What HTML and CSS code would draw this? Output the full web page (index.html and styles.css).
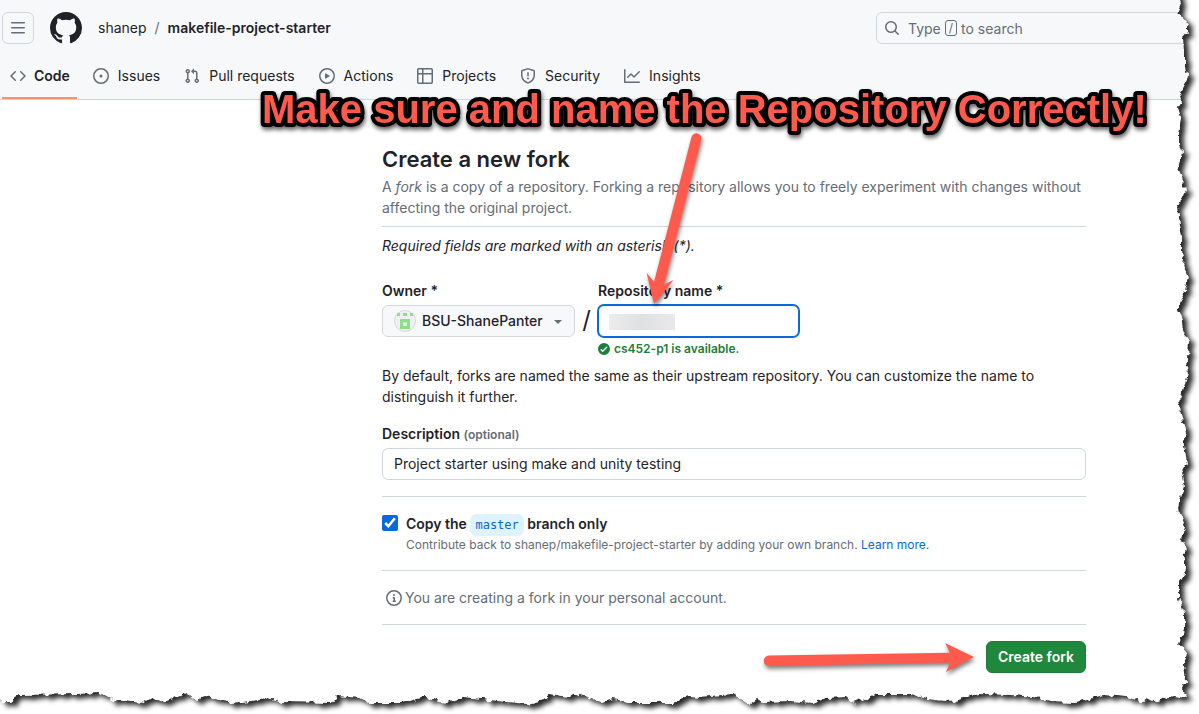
FILE: index.html
```html
<!DOCTYPE html>
<html lang="en">
<head>
<meta charset="utf-8">
<title>Fork shanep/makefile-project-starter</title>
<link rel="stylesheet" href="styles.css">
</head>
<body>
<div class="page">
  <header class="header">
    <div class="topbar">
      <button class="menu-button" type="button" aria-label="Open menu">
        <svg class="icon" viewBox="0 0 16 16"><path d="M1 2.75A.75.75 0 0 1 1.75 2h12.5a.75.75 0 0 1 0 1.5H1.75A.75.75 0 0 1 1 2.75Zm0 5A.75.75 0 0 1 1.75 7h12.5a.75.75 0 0 1 0 1.5H1.75A.75.75 0 0 1 1 7.75ZM1.75 12h12.5a.75.75 0 0 1 0 1.5H1.75a.75.75 0 0 1 0-1.5Z"/></svg>
      </button>
      <a class="logo" href="#" aria-label="Homepage">
        <svg viewBox="0 0 16 16"><path d="M8 0c4.42 0 8 3.58 8 8a8.013 8.013 0 0 1-5.45 7.59c-.4.08-.55-.17-.55-.38 0-.27.01-1.13.01-2.2 0-.75-.25-1.23-.54-1.48 1.78-.2 3.65-.88 3.65-3.95 0-.88-.31-1.59-.82-2.15.08-.2.36-1.02-.08-2.12 0 0-.67-.22-2.2.82-.64-.18-1.32-.27-2-.27-.68 0-1.36.09-2 .27-1.53-1.03-2.2-.82-2.2-.82-.44 1.1-.16 1.92-.08 2.12-.51.56-.82 1.28-.82 2.15 0 3.06 1.86 3.75 3.64 3.95-.23.2-.44.55-.51 1.07-.46.21-1.61.55-2.33-.66-.15-.24-.6-.83-1.23-.82-.67.01-.27.38.01.53.34.19.73.9.82 1.13.16.45.68 1.31 2.69.94 0 .67.01 1.3.01 1.49 0 .21-.15.45-.55.38A7.995 7.995 0 0 1 0 8c0-4.42 3.58-8 8-8Z"/></svg>
      </a>
      <nav class="crumbs" aria-label="Breadcrumb">
        <a href="#">shanep</a><span class="crumb-sep">/</span><a class="strong" href="#">makefile-project-starter</a>
      </nav>
      <button class="search" type="button">
        <svg class="icon" viewBox="0 0 16 16"><path d="M10.68 11.74a6 6 0 0 1-7.922-8.982 6 6 0 0 1 8.982 7.922l3.04 3.04a.749.749 0 0 1-.326 1.275.749.749 0 0 1-.734-.215ZM11.5 7a4.499 4.499 0 1 0-8.997 0A4.499 4.499 0 0 0 11.5 7Z"/></svg>
        <span class="search-text">Type <kbd>/</kbd> to search</span>
      </button>
    </div>
    <nav class="tabs" aria-label="Repository">
      <a class="tab current" href="#"><svg class="icon" viewBox="0 0 16 16"><path d="m11.28 3.22 4.25 4.25a.75.75 0 0 1 0 1.06l-4.25 4.25a.749.749 0 0 1-1.275-.326.749.749 0 0 1 .215-.734L13.94 8l-3.72-3.72a.749.749 0 0 1 .326-1.275.749.749 0 0 1 .734.215Zm-6.56 0a.751.751 0 0 1 1.042.018.751.751 0 0 1 .018 1.042L2.06 8l3.72 3.72a.749.749 0 0 1-.326 1.275.749.749 0 0 1-.734-.215L.47 8.53a.75.75 0 0 1 0-1.06Z"/></svg>Code</a>
      <a class="tab" href="#"><svg class="icon" viewBox="0 0 16 16"><path d="M8 9.5a1.5 1.5 0 1 0 0-3 1.5 1.5 0 0 0 0 3Z"/><path d="M8 0a8 8 0 1 1 0 16A8 8 0 0 1 8 0ZM1.5 8a6.5 6.5 0 1 0 13 0 6.5 6.5 0 0 0-13 0Z"/></svg>Issues</a>
      <a class="tab" href="#"><svg class="icon" viewBox="0 0 16 16"><path d="M1.5 3.25a2.25 2.25 0 1 1 3 2.122v5.256a2.251 2.251 0 1 1-1.5 0V5.372A2.25 2.25 0 0 1 1.5 3.25Zm5.677-.177L9.573.677A.25.25 0 0 1 10 .854V2.5h1A2.5 2.5 0 0 1 13.5 5v5.628a2.251 2.251 0 1 1-1.5 0V5a1 1 0 0 0-1-1h-1v1.646a.25.25 0 0 1-.427.177L7.177 3.427a.25.25 0 0 1 0-.354ZM3.75 2.5a.75.75 0 1 0 0 1.5.75.75 0 0 0 0-1.5Zm0 9.5a.75.75 0 1 0 0 1.5.75.75 0 0 0 0-1.5Zm8.25.75a.75.75 0 1 0 1.5 0 .75.75 0 0 0-1.5 0Z"/></svg>Pull requests</a>
      <a class="tab" href="#"><svg class="icon" viewBox="0 0 16 16"><path d="M8 0a8 8 0 1 1 0 16A8 8 0 0 1 8 0ZM1.5 8a6.5 6.5 0 1 0 13 0 6.5 6.5 0 0 0-13 0Zm4.879-2.773 4.264 2.559a.25.25 0 0 1 0 .428l-4.264 2.559A.25.25 0 0 1 6 10.559V5.442a.25.25 0 0 1 .379-.215Z"/></svg>Actions</a>
      <a class="tab" href="#"><svg class="icon" viewBox="0 0 16 16"><path d="M0 1.75C0 .784.784 0 1.75 0h12.5C15.216 0 16 .784 16 1.75v12.5A1.75 1.75 0 0 1 14.25 16H1.75A1.75 1.75 0 0 1 0 14.25ZM6.5 6.5v8h7.75a.25.25 0 0 0 .25-.25V6.5Zm8-1.5V1.75a.25.25 0 0 0-.25-.25H6.5V5Zm-13 1.5v7.75c0 .138.112.25.25.25H5v-8ZM5 5V1.5H1.75a.25.25 0 0 0-.25.25V5Z"/></svg>Projects</a>
      <a class="tab" href="#"><svg class="icon" viewBox="0 0 16 16"><path d="M7.467.133a1.748 1.748 0 0 1 1.066 0l5.25 1.68A1.75 1.75 0 0 1 15 3.48V7c0 1.566-.32 3.182-1.303 4.682-.983 1.498-2.585 2.813-5.032 3.855a1.697 1.697 0 0 1-1.33 0c-2.447-1.042-4.049-2.357-5.032-3.855C1.32 10.182 1 8.566 1 7V3.48a1.755 1.755 0 0 1 1.217-1.667Zm.61 1.429a.25.25 0 0 0-.153 0l-5.25 1.68a.25.25 0 0 0-.174.238V7c0 1.358.275 2.666 1.057 3.86.784 1.194 2.121 2.34 4.366 3.297a.196.196 0 0 0 .154 0c2.245-.956 3.582-2.104 4.366-3.298C13.225 9.666 13.5 8.36 13.5 7V3.48a.251.251 0 0 0-.174-.237l-5.25-1.68ZM8.75 4.75v3a.75.75 0 0 1-1.5 0v-3a.75.75 0 0 1 1.5 0ZM9 10.5a1 1 0 1 1-2 0 1 1 0 0 1 2 0Z"/></svg>Security</a>
      <a class="tab" href="#"><svg class="icon" viewBox="0 0 16 16"><path d="M1.5 1.75V13.5h13.75a.75.75 0 0 1 0 1.5H.75a.75.75 0 0 1-.75-.75V1.75a.75.75 0 0 1 1.5 0Zm14.28 2.53-5.25 5.25a.75.75 0 0 1-1.06 0L7 7.06 4.28 9.78a.751.751 0 0 1-1.042-.018.751.751 0 0 1-.018-1.042l3.25-3.25a.75.75 0 0 1 1.06 0L10 7.94l4.72-4.72a.751.751 0 0 1 1.042.018.751.751 0 0 1 .018 1.042Z"/></svg>Insights</a>
    </nav>
  </header>

  <main class="main">
    <h1>Create a new fork</h1>
    <p class="lead">A <em>fork</em> is a copy of a repository. Forking a repository allows you to freely experiment with changes without affecting the original project.</p>
    <form>
      <p class="required">Required fields are marked with an asterisk (*).</p>
      <div class="name-row">
        <div class="field">
          <label for="owner">Owner *</label>
          <div class="owner">
            <select id="owner"><option>BSU-ShanePanter</option></select>
            <svg class="avatar" viewBox="0 0 22 22"><circle cx="11" cy="11" r="10.5" fill="#f0f0f0" stroke="#d5d9dd"/><g fill="#8ae287"><path d="M3 3h3v3H3zM9 3h4v3H9zM16 3h3v3h-3z"/><path fill-rule="evenodd" d="M6 9h10v10H6zM9 12.500v3.500h4v-3.500z"/></g></svg>
            <svg class="caret" viewBox="0 0 8 4"><path d="M0 0h8L4 4z"/></svg>
          </div>
        </div>
        <span class="slash">/</span>
        <div class="field">
          <label for="repo">Repository name *</label>
          <div class="repo">
            <input id="repo" type="text" autocomplete="off">
            <span class="smudge"></span>
          </div>
          <p class="available"><svg viewBox="0 0 12 12"><path fill-rule="evenodd" d="M6 0a6 6 0 1 1 0 12A6 6 0 0 1 6 0Zm-.8 8.800 4-4a.7.7 0 0 0-1-1L4.700 7.300 3.700 6.300a.7.7 0 0 0-1 1l1.500 1.500a.7.7 0 0 0 1 0Z"/></svg>cs452-p1 is available.</p>
        </div>
      </div>
      <p class="hint">By default, forks are named the same as their upstream repository. You can customize the name to distinguish it further.</p>
      <div class="field description">
        <label for="desc">Description <small>(optional)</small></label>
        <input id="desc" type="text" value="Project starter using make and unity testing">
      </div>
      <div class="branch">
        <input id="only" type="checkbox" checked>
        <div>
          <label for="only">Copy the <code>master</code> branch only</label>
          <p>Contribute back to shanep/makefile-project-starter by adding your own branch. <a href="#">Learn more.</a></p>
        </div>
      </div>
      <p class="notice"><svg class="icon" viewBox="0 0 16 16"><path d="M0 8a8 8 0 1 1 16 0A8 8 0 0 1 0 8Zm8-6.500a6.500 6.500 0 1 0 0 13 6.500 6.500 0 0 0 0-13ZM6.500 7.750A.75.75 0 0 1 7.250 7h1a.75.75 0 0 1 .75.75v2.750h.25a.75.75 0 0 1 0 1.500h-2a.75.75 0 0 1 0-1.500h.25v-2h-.25a.75.75 0 0 1-.75-.75ZM8 6a1 1 0 1 1 0-2 1 1 0 0 1 0 2Z"/></svg>You are creating a fork in your personal account.</p>
      <div class="actions"><button class="primary" type="submit">Create fork</button></div>
    </form>
  </main>

  <svg class="arrow arrow-down" viewBox="0 0 70 190"><path d="M51.500 17a5 5 0 0 1 9.700 2.500L24 164.500 33.500 160 14 184 6.500 152.500 14 162Z"/></svg>
  <svg class="arrow arrow-right" viewBox="0 0 220 40"><path d="M9 15.500 190 12.700 185 3 214 17 186 32 190 22.500 9 26a5 5 0 0 1 0-10.500Z"/></svg>
  <svg class="banner" viewBox="0 0 900 60"><text x="8" y="42">Make sure and name the Repository Correctly!</text></svg>

  <svg class="torn-edge" viewBox="0 0 1199 714" preserveAspectRatio="none" aria-hidden="true">
    <filter id="torn" filterUnits="userSpaceOnUse" x="-20" y="-20" width="1239" height="754" color-interpolation-filters="sRGB">
      <feTurbulence type="fractalNoise" baseFrequency="0.15" numOctaves="2" seed="4" result="noise"/>
      <feDisplacementMap in="SourceAlpha" in2="noise" scale="7" xChannelSelector="R" yChannelSelector="G" result="paper"/>
      <feOffset in="paper" dx="5" dy="4"/>
      <feGaussianBlur stdDeviation="2.500" result="soft"/>
      <feFlood flood-color="#2a2a2a"/>
      <feComposite in2="soft" operator="in" result="shadow"/>
      <feFlood flood-color="#fff" result="back"/>
      <feMerge result="under"><feMergeNode in="back"/><feMergeNode in="shadow"/></feMerge>
      <feComposite in="under" in2="paper" operator="out"/>
    </filter>
    <path filter="url(#torn)" d="M-15 -15H1176L1181 3L1177 13L1183 18L1188 25L1188 32L1184 37L1185 50L1185 67L1188 78L1180 93L1182 100L1178 108L1182 120L1179 133L1179 145L1183 153L1178 168L1182 177L1183 185L1187 189L1183 198L1178 207L1180 225L1182 237L1182 250L1184 255L1182 262L1188 278L1186 287L1185 293L1179 303L1179 310L1183 320L1181 324L1184 333L1189 340L1188 360L1186 370L1188 374L1184 387L1179 405L1182 417L1186 433L1183 440L1187 463L1181 473L1184 487L1178 507L1181 517L1185 527L1181 540L1187 549L1183 555L1186 570L1179 581L1179 598L1184 613L1184 630L1179 643L1187 653L1184 665L1186 680L1183 688L1187 698L1173 696L1155 702L1147 698L1142 702L1127 697L1103 695L1087 700L1075 703L1050 702L1033 697L1013 695L980 694L967 697L953 702L927 699L910 694L877 694L863 702L858 697L854 703L847 697L825 698L813 703L790 701L763 702L757 699L750 704L733 694L700 697L690 696L673 703L633 703L613 699L602 703L590 698L575 693L568 697L550 694L545 700L527 704L497 701L465 697L447 703L426 697L400 703L370 703L360 698L337 696L332 703L283 702L265 697L260 700L233 703L205 697L197 700L187 693L173 699L163 703L152 697L143 703L113 700L100 693L77 694L20 695L10 702L3 702L-1 695L-15 695Z"/>
  </svg>
</div>
</body>
</html>
```
FILE: styles.css
```css
* { box-sizing: border-box; }

body {
  margin: 0;
  background: #fff;
  color: #1f2328;
  font: 14px/21px Inter, "Liberation Sans", sans-serif;
}

h1, p { margin: 0; }
a { color: inherit; text-decoration: none; }
button, input, select { font: inherit; color: inherit; }

.page {
  position: relative;
  min-height: 100vh;
  overflow: hidden;
}

.icon {
  width: 16px;
  height: 16px;
  flex: none;
  fill: #656d76;
}

/* Header */
.header {
  background: #f6f8fa;
  border-bottom: 1px solid #d0d7de;
}

.topbar {
  display: flex;
  align-items: center;
  padding: 12px 0 0 2px;
}

.menu-button {
  display: flex;
  align-items: center;
  justify-content: center;
  width: 32px;
  height: 32px;
  padding: 0;
  background: transparent;
  border: 1px solid #d0d7de;
  border-radius: 6px;
}

.logo {
  width: 32px;
  height: 32px;
  margin: 0 16px;
}

.logo svg { display: block; fill: #1f2328; }
.crumbs { padding-bottom: 2px; }
.crumb-sep { margin: 0 8px; color: #656d76; }
.strong { font-weight: 600; }

.search {
  display: flex;
  align-items: center;
  gap: 8px;
  width: 323px;
  height: 32px;
  margin-left: auto;
  padding: 0 7px;
  background: transparent;
  border: 1px solid #d0d7de;
  border-radius: 6px;
  color: #656d76;
}

.search-text {
  display: flex;
  align-items: center;
  gap: 4px;
}

kbd {
  padding: 0 3px;
  border: 1px solid #656d76;
  border-radius: 3px;
  font: 12px/14px Inter, sans-serif;
}

.tabs {
  display: flex;
  gap: 8px;
  padding-left: 2px;
}

.tab {
  display: flex;
  align-items: center;
  gap: 9px;
  height: 55px;
  padding: 10px 8px 0;
  border-bottom: 2px solid transparent;
}

.current {
  gap: 8px;
  padding-right: 7px;
  border-color: #fd8c73;
  font-weight: 600;
}

/* Form */
.main { padding: 43px 113px 41px 382px; }

h1 {
  font-size: 22px;
  line-height: 32px;
  font-weight: 600;
}

.lead {
  padding: 1px 0 8px;
  border-bottom: 1px solid #d0d7de;
  color: #656d76;
}

.required {
  margin: 8px 0 24px;
  font-style: italic;
}

.name-row { display: flex; }

label {
  display: block;
  font-weight: 600;
}

.field label { margin-bottom: 4px; }
.owner, .repo { position: relative; }

.owner select {
  display: block;
  width: 193px;
  height: 32px;
  padding: 0 30px 1px 39px;
  appearance: none;
  background: #f6f8fa;
  border: 1px solid #d5d9dd;
  border-radius: 6px;
  font-weight: 500;
}

.avatar {
  position: absolute;
  left: 12px;
  top: 5px;
  width: 22px;
  height: 22px;
}

.caret {
  position: absolute;
  right: 13px;
  top: 15px;
  width: 8px;
  height: 4px;
  fill: #656d76;
}

.slash {
  width: 23px;
  padding-top: 24px;
  font-size: 24px;
  line-height: 32px;
  text-align: center;
}

.repo input {
  display: block;
  width: 201px;
  height: 32px;
  padding: 0 12px;
  border: 1px solid #0969da;
  border-radius: 6px;
  outline: none;
  box-shadow: 0 0 0 1px #0969da;
}

.smudge {
  position: absolute;
  left: 11px;
  top: 9px;
  width: 66px;
  height: 16px;
  background: linear-gradient(90deg, #ececee, #dfe0e2 50%, #e9e9eb);
}

.available {
  display: flex;
  align-items: center;
  gap: 4px;
  margin-top: 3px;
  color: #1a7f37;
  font-size: 12px;
  line-height: 18px;
  font-weight: 600;
}

.available svg {
  width: 12px;
  height: 12px;
  fill: currentColor;
}

.hint { margin: 7px 0 16px; }

small {
  color: #656d76;
  font-size: 12px;
}

.description { padding-bottom: 16px; }
.description label { margin-bottom: 3px; }

.description input {
  display: block;
  width: 100%;
  height: 32px;
  padding: 0 11px 2px;
  border: 1px solid #d0d7de;
  border-radius: 6px;
}

.branch {
  display: flex;
  gap: 8px;
  padding: 16px 0;
  border: solid #d0d7de;
  border-width: 1px 0;
}

.branch input {
  width: 16px;
  height: 16px;
  margin: 2px 0 0;
  accent-color: #0969da;
}

code {
  padding: 4px 5px;
  background: #ddf4ff;
  border-radius: 6px;
  color: #0969da;
  font: 12px "DejaVu Sans Mono", monospace;
}

.branch p {
  margin-top: 2px;
  color: #656d76;
  font-size: 12px;
  line-height: 18px;
}

.branch a { color: #0969da; }

.notice {
  display: flex;
  align-items: center;
  gap: 3px;
  padding: 16px 0 16px 4px;
  border-bottom: 1px solid #d0d7de;
  color: #656d76;
}

.actions {
  display: flex;
  justify-content: flex-end;
  padding-top: 16px;
}

.primary {
  height: 32px;
  padding: 0 11px 1px;
  background: #1f883d;
  border: 1px solid #1c7c38;
  border-radius: 6px;
  color: #fff;
  font-weight: 600;
}

/* Annotations over the page */
.banner {
  position: absolute;
  left: 254px;
  top: 81px;
  width: 900px;
  height: 60px;
  fill: #ff5a4c;
  stroke: #000;
  stroke-width: 8px;
  stroke-linejoin: round;
  paint-order: stroke fill;
  font: bold 40px "Liberation Sans", Arial, sans-serif;
  filter: drop-shadow(1px 3px 2px rgb(0 0 0 / 60%));
}

.arrow {
  position: absolute;
  fill: #ff5a4c;
  filter: drop-shadow(1px 3px 2px rgb(0 0 0 / 50%));
}

.arrow-down {
  left: 640px;
  top: 120px;
  width: 70px;
  height: 190px;
}

.arrow-right {
  left: 760px;
  top: 640px;
  width: 220px;
  height: 40px;
}

.torn-edge {
  position: absolute;
  inset: 0;
  width: 100%;
  height: 100%;
  pointer-events: none;
}
```
